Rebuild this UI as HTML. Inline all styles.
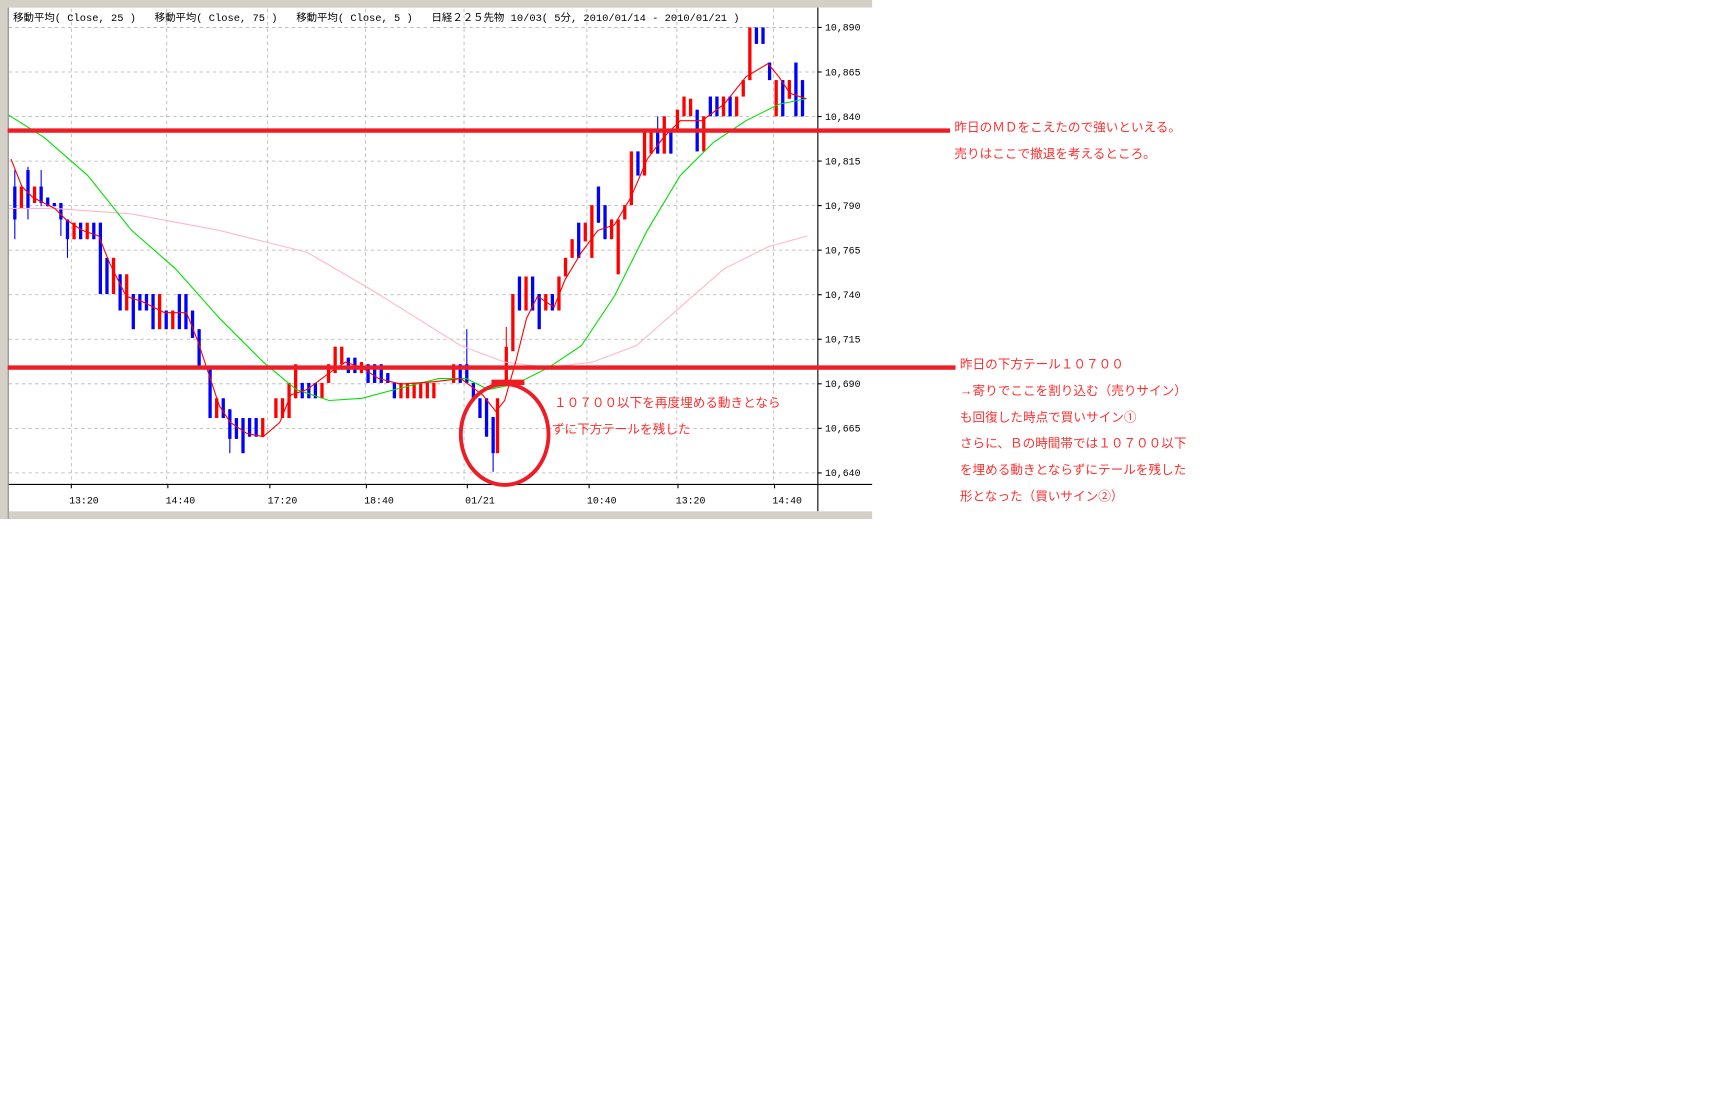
<!DOCTYPE html>
<html><head><meta charset="utf-8"><style>
html,body{margin:0;padding:0;background:#fff;width:1718px;height:1106px;overflow:hidden}
svg{display:block}
.t{font-family:"Liberation Sans","Noto Sans CJK JP",sans-serif;}
.m{font-family:"Liberation Mono","Noto Sans CJK JP",monospace;}
</style></head><body>
<svg id="s" width="1718" height="1106" viewBox="0 0 1566 1008" preserveAspectRatio="none" xmlns="http://www.w3.org/2000/svg">
<rect x="0" y="0" width="795" height="473" fill="#fff"/>
<rect x="0" y="0" width="795" height="7" fill="#d4d0c8"/>
<rect x="0" y="0" width="7" height="473" fill="#d4d0c8"/>
<line x1="7.5" y1="7" x2="7.5" y2="473" stroke="#808080"/>
<rect x="745" y="7" width="50" height="466" fill="#fff"/>
<line x1="745.5" y1="7" x2="745.5" y2="466" stroke="#000"/>
<line x1="8" y1="441.5" x2="795" y2="441.5" stroke="#000"/>
<rect x="8" y="466" width="787" height="7" fill="#d4d0c8"/>
<g id="grid" stroke="#b0b0b0" stroke-dasharray="3,3" stroke-width="0.7"></g>
<g id="c"></g>
<polyline fill="none" stroke="#ffb8c8" stroke-width="1" points="8,190 50,190 120,195 200,210 280,230 340,265 380,290 420,315 460,330 500,335 540,330 580,315 620,280 660,245 700,225 736,215"/>
<polyline fill="none" stroke="#00e000" stroke-width="1" points="8,105 40,125 80,160 120,210 160,245 200,290 240,330 270,355 300,365 330,363 360,355 400,345 425,345 445,355 470,350 500,335 530,315 560,270 590,210 620,160 650,130 680,110 710,95 735,90"/>
<polyline fill="none" stroke="#ff0000" stroke-width="1" points="10,145 20,170 30,180 40,185 50,190 60,200 75,210 90,215 100,240 115,270 130,275 150,285 170,285 180,310 190,340 200,370 210,385 225,395 240,398 255,385 265,360 280,355 300,340 315,330 330,335 345,345 365,350 395,348 420,345 440,360 452,375 460,365 470,330 480,290 490,270 505,280 515,255 530,230 545,210 560,205 575,180 590,145 605,125 620,110 640,110 660,95 680,70 700,58 710,70 720,85 735,90"/>
<text class="m" x="12" y="19" font-size="9.5" fill="#000" xml:space="preserve">移動平均( Close, 25 )   移動平均( Close, 75 )   移動平均( Close, 5 )   日経２２５先物 10/03( 5分, 2010/01/14 - 2010/01/21 )</text>
<g id="ax" class="m" font-size="9" fill="#000"></g>
<rect x="7" y="117" width="859" height="4" fill="#ee1c24"/>
<rect x="7" y="333" width="864" height="4" fill="#ee1c24"/>
<rect x="448" y="346" width="30" height="5" fill="#ee1c24"/>
<ellipse cx="460" cy="396" rx="40" ry="46" fill="none" stroke="#ee1c24" stroke-width="3.5"/>
<g class="t" font-size="11.5" fill="#ff3030">
<text x="505" y="371">１０７００以下を再度埋める動きとなら</text>
<text x="503" y="395">ずに下方テールを残した</text>
<text x="870" y="120">昨日のＭＤをこえたので強いといえる。</text>
<text x="870" y="144">売りはここで撤退を考えるところ。</text>
<text x="875" y="336">昨日の下方テール１０７００</text>
<text x="875" y="360">→寄りでここを割り込む（売りサイン）</text>
<text x="875" y="384">も回復した時点で買いサイン①</text>
<text x="875" y="408">さらに、Ｂの時間帯では１０７００以下</text>
<text x="875" y="432">を埋める動きとならずにテールを残した</text>
<text x="875" y="456">形となった（買いサイン②）</text>
</g>
</svg>
<script>
var NS="http://www.w3.org/2000/svg";
function el(p,n,a,t){var e=document.createElementNS(NS,n);for(var k in a)e.setAttribute(k,a[k]);if(t)e.textContent=t;document.getElementById(p).appendChild(e);}
[65,152,244,333,423,535,617,705].forEach(function(x){el("grid","line",{x1:x,y1:8,x2:x,y2:441});});
var P=["10,890","10,865","10,840","10,815","10,790","10,765","10,740","10,715","10,690","10,665","10,640"];
P.forEach(function(p,i){var y=25+i*40.6;el("grid","line",{x1:8,y1:y,x2:745,y2:y});el("ax","line",{x1:745,y1:y,x2:749,y2:y,stroke:"#000"});el("ax","text",{x:752,y:y+3},p);});
[["13:20",63],["14:40",151],["17:20",244],["18:40",332],["01/21",424],["10:40",535],["13:20",616],["14:40",704]].forEach(function(a){el("ax","text",{x:a[1],y:459},a[0]);el("ax","line",{x1:a[1]+2,y1:441,x2:a[1]+2,y2:445,stroke:"#000"});});
var C=[[12,"b",170,200,155,218],[18,"r",170,190],[24,"b",155,190,152,200],[30,"r",170,185],[36,"b",170,185,155,188],[42,"b",180,188],[48,"b",185,188],[54,"b",185,200,185,215],[60,"b",200,218,200,235],[66,"r",203,218],[72,"b",203,218],[78,"r",203,218],[84,"b",203,218],[90,"b",203,268],[96,"b",235,268],[102,"r",235,268],[108,"b",250,283],[114,"r",250,283],[120,"b",268,300],[126,"b",268,283],[132,"b",268,283],[138,"b",268,300],[144,"r",268,300],[150,"b",283,300],[156,"r",283,300],[162,"b",268,300],[168,"b",268,300],[174,"b",283,308],[180,"b",300,335],[190,"b",335,381],[196,"r",363,381],[202,"b",363,381],[208,"b",373,400,373,413],[214,"b",381,400],[220,"b",381,413],[226,"b",381,398],[232,"b",381,398],[238,"r",381,398],[250,"r",363,381],[256,"r",363,381],[262,"r",349,381],[268,"r",332,363],[274,"b",349,363],[280,"b",349,363],[286,"b",349,363],[292,"r",349,363],[298,"r",332,349],[304,"r",316,340],[310,"r",316,332],[316,"b",326,340],[322,"b",326,340],[328,"r",330,340],[334,"b",332,349],[340,"b",332,349],[346,"b",332,349],[352,"b",340,349],[358,"b",349,363],[364,"r",349,363],[370,"r",349,363],[376,"r",349,363],[382,"r",349,363],[388,"r",349,363],[394,"r",349,363],[412,"r",332,349],[418,"b",332,349],[424,"b",332,349,300,349],[430,"b",349,363],[436,"b",363,381],[442,"b",363,398],[448,"b",380,413,380,430],[452,"r",363,413],[460,"r",316,349,298,349],[466,"r",268,320],[472,"b",252,283],[478,"r",252,283],[484,"b",252,283],[490,"b",268,300],[496,"r",268,283],[502,"b",268,283],[508,"r",252,283],[514,"r",235,252],[520,"r",218,235],[526,"b",203,235],[532,"r",203,220],[538,"r",187,235],[544,"b",170,203],[550,"b",187,218],[556,"r",200,218],[562,"r",200,250],[568,"r",187,200],[574,"r",138,187],[580,"b",138,160],[586,"r",120,160],[592,"r",120,140],[598,"b",120,140,106,140],[604,"r",106,140],[610,"b",120,140],[616,"r",100,120],[622,"r",88,106],[628,"r",90,106],[634,"b",100,138],[640,"r",106,138],[646,"b",88,106],[652,"b",88,106],[658,"r",88,106],[664,"b",88,106],[670,"r",88,106],[676,"r",73,88],[682,"r",25,73],[688,"b",25,40],[694,"b",25,40],[700,"b",57,73],[706,"r",73,106],[712,"b",73,106],[718,"r",73,90],[724,"b",57,106],[730,"b",73,106]];
C.forEach(function(c){var col=c[1]=="r"?"#ff0000":"#0000ff";var wt=c[4]||c[2],wb=c[5]||c[3];el("c","line",{x1:c[0]+1.5,y1:wt,x2:c[0]+1.5,y2:wb,stroke:col,"stroke-width":1});el("c","rect",{x:c[0],y:c[2],width:3,height:Math.max(2,c[3]-c[2]),fill:col});});
</script>
</body></html>
